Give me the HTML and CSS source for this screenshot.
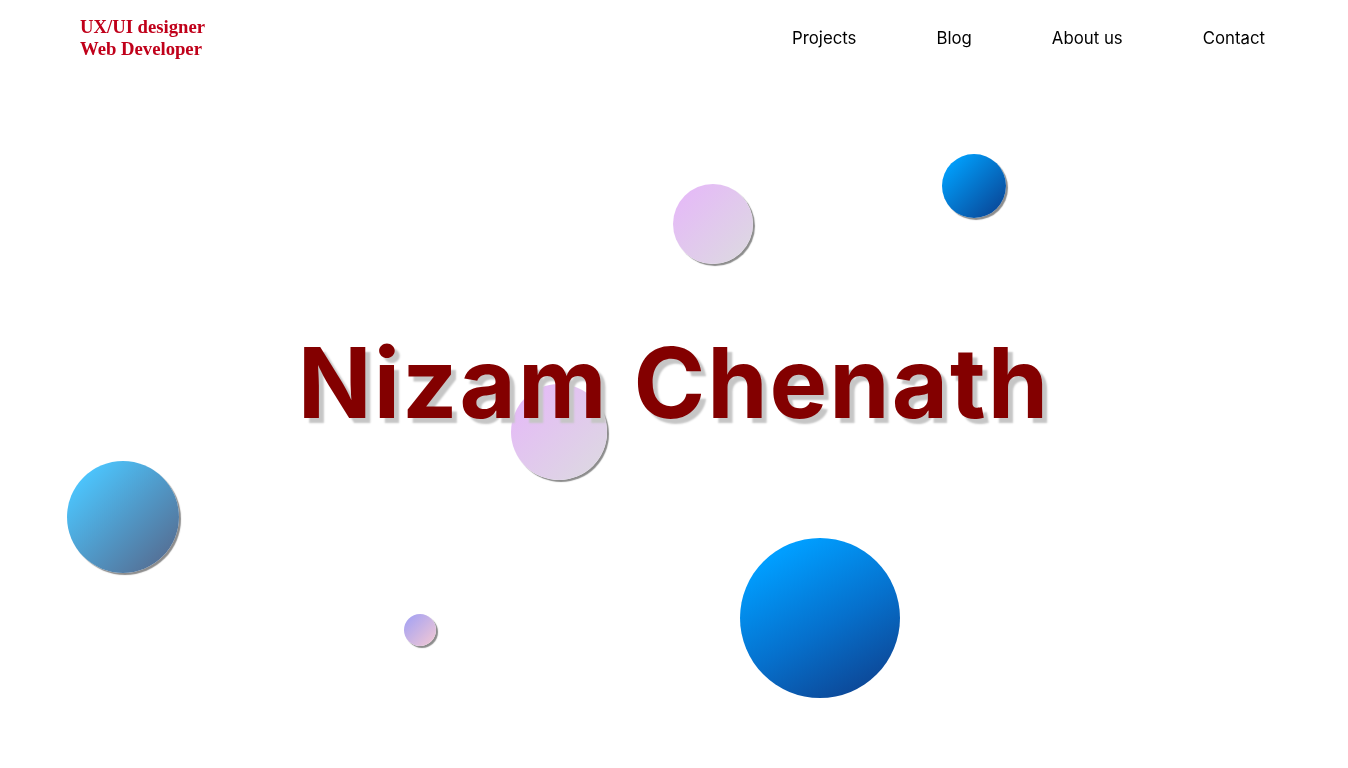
FILE: index.html
```html
<!DOCTYPE html>
<html lang="en">
<head>
<meta charset="utf-8">
<title>Nizam Chenath</title>
<link rel="stylesheet" href="styles.css">
</head>
<body>
  <header class="site-header">
    <div class="brand">
      <span>UX/UI designer</span>
      <span>Web Developer</span>
    </div>
    <nav class="main-nav">
      <a href="#projects">Projects</a>
      <a href="#blog">Blog</a>
      <a href="#about">About us</a>
      <a href="#contact">Contact</a>
    </nav>
  </header>

  <section class="hero">
    <span class="bubble bubble-lilac-top"></span>
    <span class="bubble bubble-blue-small"></span>
    <span class="bubble bubble-lilac-mid"></span>
    <span class="bubble bubble-sky"></span>
    <span class="bubble bubble-tiny"></span>
    <span class="bubble bubble-blue-big"></span>
    <h1 class="hero-title">Nizam Chenath</h1>
  </section>

  <section id="projects" class="section"></section>
  <section id="blog" class="section"></section>
  <section id="about" class="section"></section>
  <section id="contact" class="section"></section>
</body>
</html>
```

FILE: styles.css
```css
body {
  margin: 0;
  background: #ffffff;
  font-family: Inter, "Noto Sans", sans-serif;
}

.site-header {
  position: fixed;
  top: 0;
  left: 0;
  right: 3px;
  z-index: 5;
  display: flex;
  justify-content: space-between;
  align-items: center;
  padding: 16px 80px 0;
}

.brand {
  display: flex;
  flex-direction: column;
  font-family: "Liberation Serif", "Times New Roman", serif;
  font-weight: 700;
  font-size: 18.7px;
  line-height: 22px;
  color: #c0001a;
}

.main-nav {
  display: flex;
  gap: 80px;
}

.main-nav a {
  color: #000;
  text-decoration: none;
  font-size: 16.8px;
  line-height: 24px;
}

.hero {
  position: relative;
  height: 768px;
  display: flex;
  align-items: center;
  justify-content: center;
  overflow: hidden;
}

.hero-title {
  position: relative;
  z-index: 2;
  margin: 0 0 4px;
  font-family: Inter, "Noto Sans", sans-serif;
  font-weight: 700;
  font-size: 97px;
  line-height: 1;
  letter-spacing: 2px;
  color: #830000;
  text-shadow: 5px 5px 2px #c6c6c6;
}

.bubble {
  position: absolute;
  border-radius: 50%;
  box-shadow: 2px 2px 1px rgba(0, 0, 0, 0.45);
}

.bubble-lilac-top {
  left: 673px;
  top: 184px;
  width: 80px;
  height: 80px;
  background: linear-gradient(135deg, #e6b6fa 0%, #dcdbe0 100%);
}

.bubble-blue-small {
  left: 942px;
  top: 154px;
  width: 64px;
  height: 64px;
  background: linear-gradient(135deg, #00a2ff 10%, #0a3d8c 100%);
}

.bubble-lilac-mid {
  left: 511px;
  top: 384px;
  width: 96px;
  height: 96px;
  background: linear-gradient(135deg, #e6b6fa 0%, #dcdbe0 100%);
}

.bubble-sky {
  left: 67px;
  top: 461px;
  width: 112px;
  height: 112px;
  background: linear-gradient(135deg, #4cc3fb 15%, #566285 100%);
}

.bubble-tiny {
  left: 404px;
  top: 614px;
  width: 32px;
  height: 32px;
  background: linear-gradient(135deg, #9f9ff5 0%, #f5c9d3 100%);
}

.bubble-blue-big {
  left: 740px;
  top: 538px;
  width: 160px;
  height: 160px;
  box-shadow: none;
  background: linear-gradient(150deg, #009eff 15%, #0670cc 55%, #0f3a85 100%);
}

.section {
  height: 840px;
}
```
